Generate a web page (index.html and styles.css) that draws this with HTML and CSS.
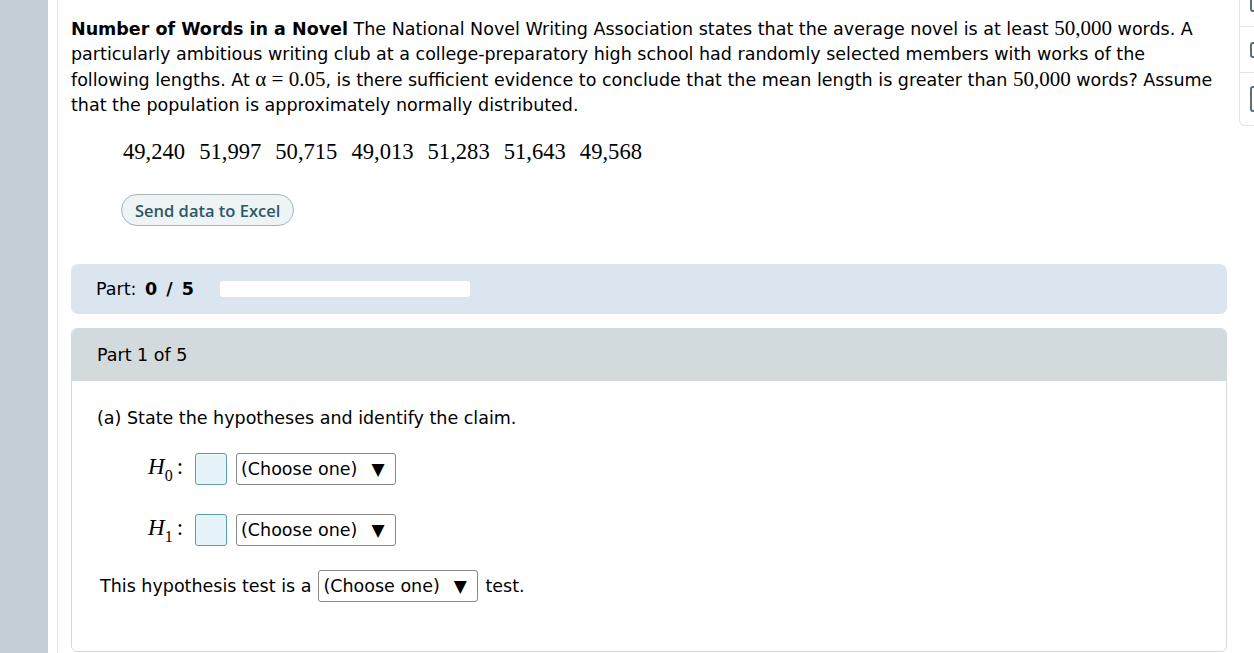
FILE: index.html
```html
<!DOCTYPE html>
<html>
  <head>
    <meta charset="utf-8">
    <link rel="stylesheet" href="styles.css">
  </head>
  <body>
    <div class="page">
      <div class="sidebar"></div>
      <div class="rail"></div>
      <div class="content">
        <p class="problem">
          <b>Number of Words in a Novel</b> The National Novel Writing Association states that the average novel is at least <span class="math">50,000</span> words. A particularly ambitious writing club at a college-preparatory high school had randomly selected members with works of the following lengths. At <span class="math">α = 0.05</span>, is there sufficient evidence to conclude that the mean length is greater than <span class="math">50,000</span> words? Assume that the population is approximately normally distributed.
        </p>
        <div class="data-row">
          <span>49,240</span><span>51,997</span><span>50,715</span><span>49,013</span><span>51,283</span><span>51,643</span><span>49,568</span>
        </div>
        <button type="button" class="excel-button">Send data to Excel</button>

        <div class="progress-bar">
          <span>Part: <b class="score">0 / 5</b></span>
          <div class="progress-track"></div>
        </div>

        <div class="part-card">
          <div class="part-header">Part 1 of 5</div>
          <div class="part-body">
            <p class="question">(a) State the hypotheses and identify the claim.</p>
            <div class="hyp-row">
              <span class="hyp-label"><i>H</i><sub>0</sub>:</span>
              <span class="answer-box"></span>
              <span class="choose">(Choose one) <span class="arrow">▼</span></span>
            </div>
            <div class="hyp-row">
              <span class="hyp-label"><i>H</i><sub>1</sub>:</span>
              <span class="answer-box"></span>
              <span class="choose">(Choose one) <span class="arrow">▼</span></span>
            </div>
            <div class="test-row">
              This hypothesis test is a
              <span class="choose">(Choose one) <span class="arrow">▼</span></span>
              test.
            </div>
          </div>
        </div>
      </div>
      <div class="tool-panel">
        <div class="tool-slot"><span class="tool-btn"></span></div>
        <div class="tool-slot"><span class="tool-btn"></span></div>
        <div class="tool-slot last"><span class="tool-btn tall"></span></div>
      </div>
    </div>
  </body>
</html>
```

FILE: styles.css
```css
:root {
  --side-color: #c2ced4;
  --line-color: #e2e5e7;
  --part-bar: #dae5ef;
  --card-head: #d3dadd;
  --box-fill: #e6f3f7;
  --box-border: #5e9faf;
  --button-text: #2d5869;
}
* { box-sizing: border-box; }
body {
  margin: 0;
  font-family: "DejaVu Sans", Verdana, sans-serif;
  font-size: 17.5px;
  color: #000;
  background-color: #fff;
  overflow: hidden;
}
.page {
  display: flex;
  height: 653px;
  overflow: hidden;
}
.sidebar {
  width: 48px;
  flex-shrink: 0;
  background-color: var(--side-color);
}
.rail {
  width: 10px;
  flex-shrink: 0;
  border-right: 1px solid var(--line-color);
}
.content {
  width: 1170px;
  flex-shrink: 0;
  padding: 16px 0 0 13px;
}
.problem {
  margin: 0;
  line-height: 25px;
  padding-right: 4px;
}
.math {
  font-family: "Liberation Serif", serif;
  font-size: 21px;
}
.data-row {
  margin: 19px 0 0 52px;
  display: flex;
  gap: 14px;
  font-family: "Liberation Serif", serif;
  font-size: 22.6px;
  line-height: 30px;
}
.excel-button {
  margin: 27px 0 0 50px;
  height: 32px;
  padding: 0 13px;
  border: 1px solid #a3b6bf;
  border-radius: 16px;
  background-color: #eef3f5;
  color: var(--button-text);
  font-family: "Open Sans", sans-serif;
  font-weight: 600;
  font-size: 16.5px;
}
.progress-bar {
  margin-top: 38px;
  height: 50px;
  width: 1156px;
  background-color: var(--part-bar);
  border-radius: 7px;
  display: flex;
  align-items: center;
  gap: 26px;
  padding-left: 25px;
  word-spacing: 3px;
}
.progress-track {
  width: 250px;
  height: 16px;
  background-color: #fff;
  border-radius: 3px;
}
.part-card {
  margin-top: 14px;
  width: 1156px;
  height: 324px;
  border: 1px solid var(--card-head);
  border-radius: 6px;
  overflow: hidden;
}
.part-header {
  height: 52px;
  background-color: var(--card-head);
  padding-left: 25px;
  display: flex;
  align-items: center;
}
.part-body {
  padding: 24px 0 0 25px;
}
.question {
  margin: 0 0 22px;
  line-height: 26px;
}
.hyp-row {
  display: flex;
  align-items: center;
  height: 32px;
  margin: 0 0 29px 51px;
}
.hyp-label {
  font-family: "Liberation Serif", serif;
  font-size: 23px;
  width: 47px;
  white-space: nowrap;
}
.hyp-label sub {
  font-size: 16px;
  vertical-align: -7px;
  margin-right: 4px;
}
.answer-box {
  width: 32px;
  height: 32px;
  background-color: var(--box-fill);
  border: 1px solid var(--box-border);
  border-radius: 3px;
  margin-right: 9px;
}
.choose {
  display: inline-flex;
  align-items: center;
  height: 32px;
  width: 160px;
  padding-left: 4px;
  border: 1px solid #888;
  border-radius: 3px;
  white-space: nowrap;
}
.choose .arrow {
  margin-left: 14px;
  font-size: 17px;
}
.test-row {
  display: flex;
  align-items: center;
  gap: 7px;
  margin: -5px 0 0 3px;
}
.tool-panel {
  margin-left: 11px;
  width: 60px;
  height: 126px;
  flex-shrink: 0;
  border: 1px solid var(--line-color);
  border-top: none;
  border-radius: 0 0 6px 6px;
  display: flex;
  flex-direction: column;
}
.tool-slot {
  height: 46px;
  border-bottom: 1px solid var(--line-color);
  padding-left: 10px;
  display: flex;
  align-items: center;
}
.tool-slot:first-child {
  height: 27px;
  align-items: flex-start;
}
.tool-slot.last {
  border-bottom: none;
  flex: 1;
}
.tool-btn {
  width: 20px;
  height: 16px;
  border: 2px solid #5b6e78;
  border-radius: 3px;
}
.tool-slot:first-child .tool-btn {
  margin-top: -4px;
}
.tool-btn.tall {
  height: 26px;
}
```
